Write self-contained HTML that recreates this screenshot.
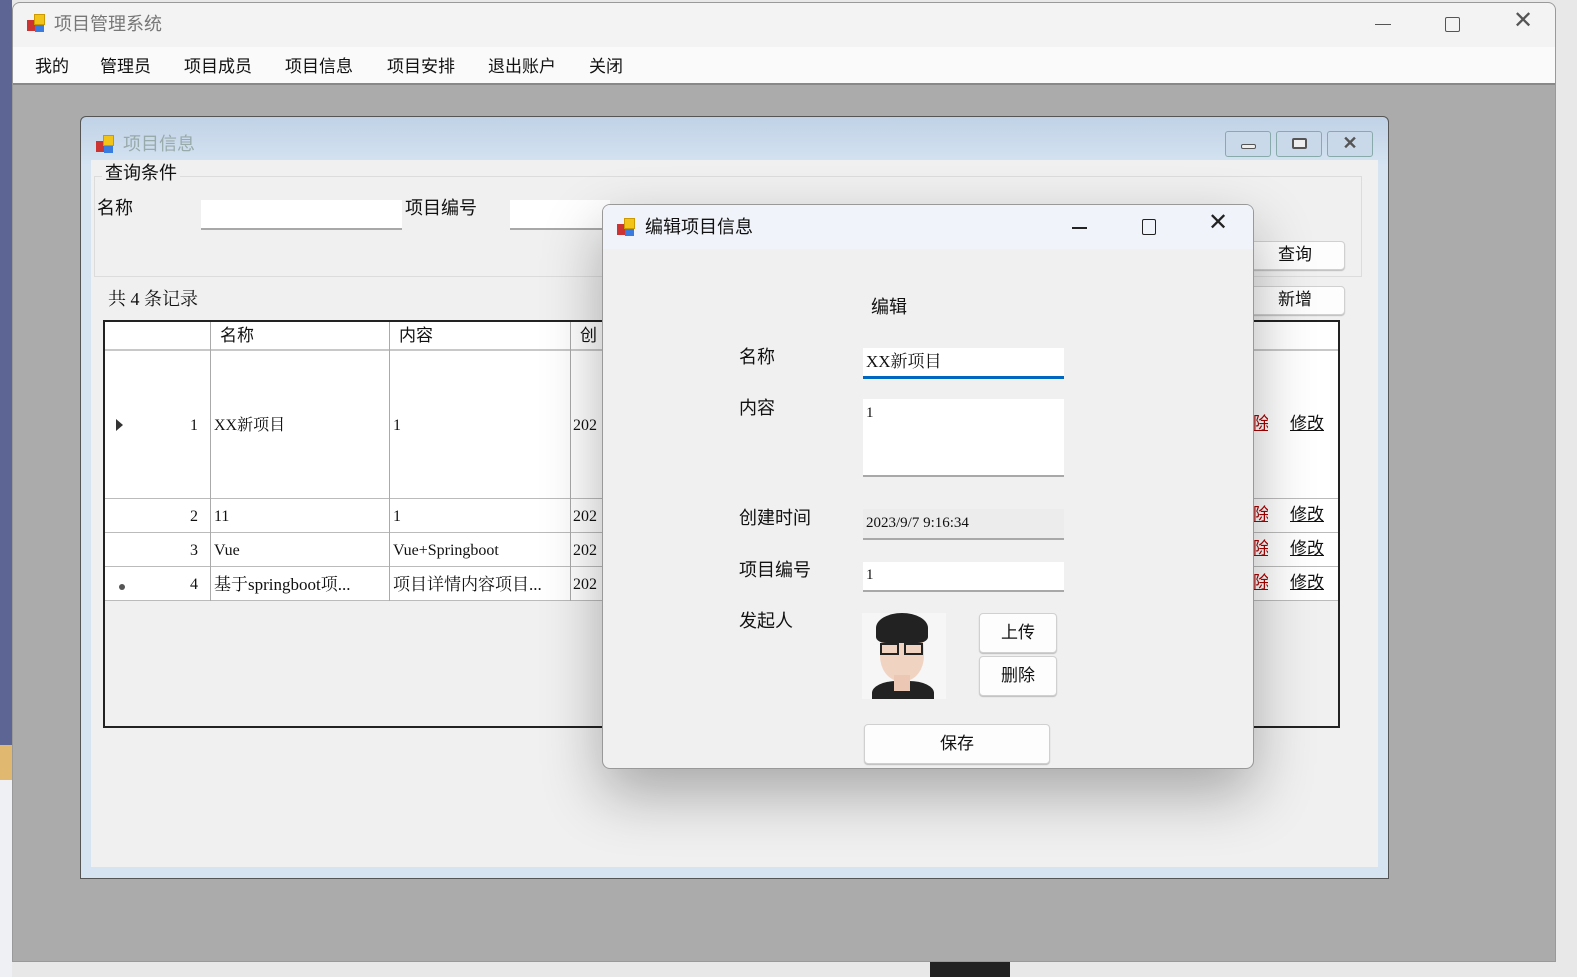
<!DOCTYPE html>
<html><head><meta charset="utf-8"><style>
*{box-sizing:border-box;margin:0;padding:0}
body{width:1577px;height:977px;position:relative;overflow:hidden;background:#e8e8e8;font-family:"Liberation Sans","Noto Sans CJK SC",sans-serif;color:#111}
.a{position:absolute}
.t{position:absolute;font-size:17px;white-space:nowrap;line-height:20px}
.serif{font-family:"Liberation Serif","Noto Serif CJK SC",serif;font-size:16px}
.inp{position:absolute;background:#fff;border-bottom:2px solid #a8a8a8}
.btn{position:absolute;background:#fdfdfd;border:1px solid #d0d0d0;border-radius:4px;box-shadow:0 1px 1px #bbb;text-align:center;font-size:17px}
.ico{position:absolute;width:18px;height:18px}
.ico i{position:absolute;display:block}
</style></head><body>
<div class="a" style="left:0;top:0;width:12px;height:750px;background:#5c6594"></div>
<div class="a" style="left:0;top:745px;width:12px;height:35px;background:#e0b870"></div>
<div class="a" style="left:0;top:780px;width:12px;height:197px;background:#eef0f4"></div>
<div class="a" style="left:930px;top:962px;width:80px;height:15px;background:#222"></div>
<!-- main window -->
<div class="a" style="left:12px;top:2px;width:1544px;height:960px;background:#ababab;border:1px solid #999;border-radius:8px 8px 0 0;overflow:hidden">
 <div class="a" style="left:0;top:0;width:1544px;height:44px;background:#f3f3f3"></div>
 <div class="ico" style="left:14px;top:11px"><i style="left:0;top:6px;width:8px;height:11px;background:#c33"></i><i style="left:7px;top:0;width:11px;height:11px;background:#f2c318;border:1px solid #c90"></i><i style="left:8px;top:11px;width:9px;height:7px;background:#3a7be0"></i></div>
 <div class="t" style="left:41px;top:11px;color:#777;font-size:18px">项目管理系统</div>
 <div class="a" style="left:1362px;top:21px;width:16px;height:1px;background:#555"></div>
 <div class="a" style="left:1432px;top:14px;width:15px;height:15px;border:1px solid #555;border-radius:2px"></div>
 <div class="t" style="left:1500px;top:8px;font-size:24px;color:#555;font-weight:300">✕</div>
 <div class="a" style="left:0;top:44px;width:1544px;height:38px;background:#fafafa;border-bottom:2px solid #888"></div>
 <div class="t" style="left:22px;top:54px">我的</div>
 <div class="t" style="left:87px;top:54px">管理员</div>
 <div class="t" style="left:171px;top:54px">项目成员</div>
 <div class="t" style="left:272px;top:54px">项目信息</div>
 <div class="t" style="left:374px;top:54px">项目安排</div>
 <div class="t" style="left:475px;top:54px">退出账户</div>
 <div class="t" style="left:576px;top:54px">关闭</div>
</div>
<!-- MDI child -->
<div class="a" style="left:80px;top:116px;width:1309px;height:763px;background:linear-gradient(#c0d2e6,#d6e4f2 50px);border:1px solid #555;border-radius:6px 6px 0 0">
 <div class="ico" style="left:15px;top:18px"><i style="left:0;top:6px;width:8px;height:11px;background:#c33"></i><i style="left:7px;top:0;width:11px;height:11px;background:#f2c318;border:1px solid #c90"></i><i style="left:8px;top:11px;width:9px;height:7px;background:#3a7be0"></i></div>
 <div class="t" style="left:42px;top:17px;color:#9aa;font-size:18px">项目信息</div>
 <div class="a" style="left:1144px;top:14px;width:46px;height:26px;border:1px solid #8aa;border-radius:3px;background:#cad9ea"><div class="a" style="left:15px;top:12px;width:15px;height:5px;border:1px solid #555;background:#eee;border-radius:2px"></div></div>
 <div class="a" style="left:1195px;top:14px;width:46px;height:26px;border:1px solid #8aa;border-radius:3px;background:#cad9ea"><div class="a" style="left:15px;top:6px;width:15px;height:11px;border:2px solid #555;background:#eee;border-radius:2px"></div></div>
 <div class="a" style="left:1246px;top:14px;width:46px;height:26px;border:1px solid #8aa;border-radius:3px;background:#cad9ea;text-align:center;font-size:18px;line-height:22px;color:#555;font-weight:bold">✕</div>
 <div class="a" style="left:10px;top:43px;width:1287px;height:707px;background:#f0f0f0"></div>
</div>
<!-- group box -->
<div class="a" style="left:94px;top:176px;width:1268px;height:101px;border:1px solid #dcdcdc"></div>
<div class="t" style="left:102px;top:163px;background:#f0f0f0;padding:0 3px;font-size:18px">查询条件</div>
<div class="t" style="left:97px;top:198px;font-size:18px">名称</div>
<div class="inp" style="left:201px;top:200px;width:201px;height:30px"></div>
<div class="t" style="left:405px;top:198px;font-size:18px">项目编号</div>
<div class="inp" style="left:510px;top:200px;width:100px;height:30px"></div>
<div class="btn" style="left:1245px;top:241px;width:100px;height:29px;line-height:26px">查询</div>
<div class="btn" style="left:1245px;top:286px;width:100px;height:29px;line-height:26px">新增</div>
<div class="t serif" style="left:108px;top:289px;font-size:18px">共 4 条记录</div>
<!-- grid -->
<div class="a" style="left:103px;top:320px;width:1237px;height:408px;background:#f0f0f0;border:2px solid #222"></div>
<div class="a" style="left:105px;top:322px;width:1233px;height:279px;background:#fff"></div>
<div class="a" style="left:105px;top:349px;width:1233px;height:2px;background:#c8c8c8"></div>
<div class="a" style="left:105px;top:498px;width:1233px;height:1px;background:#bbb"></div>
<div class="a" style="left:105px;top:532px;width:1233px;height:1px;background:#bbb"></div>
<div class="a" style="left:105px;top:566px;width:1233px;height:1px;background:#bbb"></div>
<div class="a" style="left:105px;top:600px;width:1233px;height:1px;background:#bbb"></div>
<div class="a" style="left:210px;top:322px;width:1px;height:279px;background:#aaa"></div>
<div class="a" style="left:389px;top:322px;width:1px;height:279px;background:#aaa"></div>
<div class="a" style="left:570px;top:322px;width:1px;height:279px;background:#aaa"></div>
<div class="t" style="left:220px;top:326px">名称</div>
<div class="t" style="left:399px;top:326px">内容</div>
<div class="t" style="left:580px;top:326px">创</div>
<div class="a" style="left:116px;top:419px;width:0;height:0;border-left:7px solid #333;border-top:6px solid transparent;border-bottom:6px solid transparent"></div>
<div class="a" style="left:119px;top:584px;width:6px;height:6px;border-radius:3px;background:#555"></div>
<div class="t serif" style="left:190px;top:416px">1</div><div class="t serif" style="left:214px;top:416px">XX新项目</div><div class="t serif" style="left:393px;top:416px">1</div><div class="t serif" style="left:573px;top:416px">202</div>
<div class="t serif" style="left:190px;top:507px">2</div><div class="t serif" style="left:214px;top:507px">11</div><div class="t serif" style="left:393px;top:507px">1</div><div class="t serif" style="left:573px;top:507px">202</div>
<div class="t serif" style="left:190px;top:541px">3</div><div class="t serif" style="left:214px;top:541px">Vue</div><div class="t serif" style="left:393px;top:541px">Vue+Springboot</div><div class="t serif" style="left:573px;top:541px">202</div>
<div class="t serif" style="left:190px;top:575px">4</div><div class="t serif" style="left:214px;top:575px;font-size:17px">基于springboot项...</div><div class="t serif" style="left:393px;top:575px;font-size:17px">项目详情内容项目...</div><div class="t serif" style="left:573px;top:575px">202</div>
<div class="t" style="left:1253px;top:414px;color:#a00;text-decoration:underline;width:15px;overflow:hidden">除</div><div class="t" style="left:1290px;top:414px;text-decoration:underline">修改</div>
<div class="t" style="left:1253px;top:505px;color:#a00;text-decoration:underline;width:15px;overflow:hidden">除</div><div class="t" style="left:1290px;top:505px;text-decoration:underline">修改</div>
<div class="t" style="left:1253px;top:539px;color:#a00;text-decoration:underline;width:15px;overflow:hidden">除</div><div class="t" style="left:1290px;top:539px;text-decoration:underline">修改</div>
<div class="t" style="left:1253px;top:573px;color:#a00;text-decoration:underline;width:15px;overflow:hidden">除</div><div class="t" style="left:1290px;top:573px;text-decoration:underline">修改</div>
<!-- dialog -->
<div class="a" style="left:602px;top:204px;width:652px;height:565px;background:#f0f0f0;border:1px solid #999;border-radius:8px;box-shadow:0 25px 60px rgba(0,0,0,.3);overflow:hidden">
 <div class="a" style="left:0;top:0;width:652px;height:44px;background:#f0f3f9"></div>
 <div class="ico" style="left:14px;top:13px"><i style="left:0;top:6px;width:8px;height:11px;background:#c33"></i><i style="left:7px;top:0;width:11px;height:11px;background:#f2c318;border:1px solid #c90"></i><i style="left:8px;top:11px;width:9px;height:7px;background:#3a7be0"></i></div>
 <div class="t" style="left:42px;top:12px;font-size:18px">编辑项目信息</div>
 <div class="a" style="left:469px;top:22px;width:15px;height:1.5px;background:#222"></div>
 <div class="a" style="left:539px;top:14px;width:14px;height:16px;border:1.5px solid #222;border-radius:2px"></div>
 <div class="t" style="left:605px;top:8px;font-size:24px;color:#222;font-weight:300">✕</div>
</div>
<div class="t" style="left:871px;top:297px;font-size:18px">编辑</div>
<div class="t" style="left:739px;top:347px;font-size:18px">名称</div>
<div class="t" style="left:739px;top:398px;font-size:18px">内容</div>
<div class="t" style="left:739px;top:508px;font-size:18px">创建时间</div>
<div class="t" style="left:739px;top:560px;font-size:18px">项目编号</div>
<div class="t" style="left:739px;top:611px;font-size:18px">发起人</div>
<div class="inp" style="left:863px;top:348px;width:201px;height:31px;border-bottom:3px solid #0067c0"></div>
<div class="t serif" style="left:866px;top:352px;font-size:17px">XX新项目</div>
<div class="inp" style="left:863px;top:399px;width:201px;height:78px"></div>
<div class="t serif" style="left:866px;top:403px;font-size:15px">1</div>
<div class="inp" style="left:863px;top:509px;width:201px;height:31px;background:#ececec"></div>
<div class="t serif" style="left:866px;top:513px;font-size:15px">2023/9/7 9:16:34</div>
<div class="inp" style="left:863px;top:562px;width:201px;height:30px"></div>
<div class="t serif" style="left:866px;top:565px;font-size:15px">1</div>
<!-- avatar -->
<div class="a" style="left:862px;top:613px;width:84px;height:86px;background:#f6f6f6;overflow:hidden">
 <div class="a" style="left:18px;top:12px;width:44px;height:56px;border-radius:45%;background:#f1d3c1"></div>
 <div class="a" style="left:14px;top:0;width:52px;height:30px;border-radius:50% 50% 20% 20%;background:#222"></div>
 <div class="a" style="left:18px;top:30px;width:19px;height:12px;border:2px solid #222"></div>
 <div class="a" style="left:42px;top:30px;width:19px;height:12px;border:2px solid #222"></div>
 <div class="a" style="left:10px;top:68px;width:62px;height:30px;border-radius:40% 40% 0 0;background:#222"></div>
 <div class="a" style="left:32px;top:62px;width:16px;height:16px;background:#ecc8b4"></div>
</div>
<div class="btn" style="left:979px;top:613px;width:78px;height:40px;line-height:37px">上传</div>
<div class="btn" style="left:979px;top:656px;width:78px;height:40px;line-height:37px">删除</div>
<div class="btn" style="left:864px;top:724px;width:186px;height:40px;line-height:37px">保存</div>
</body></html>
